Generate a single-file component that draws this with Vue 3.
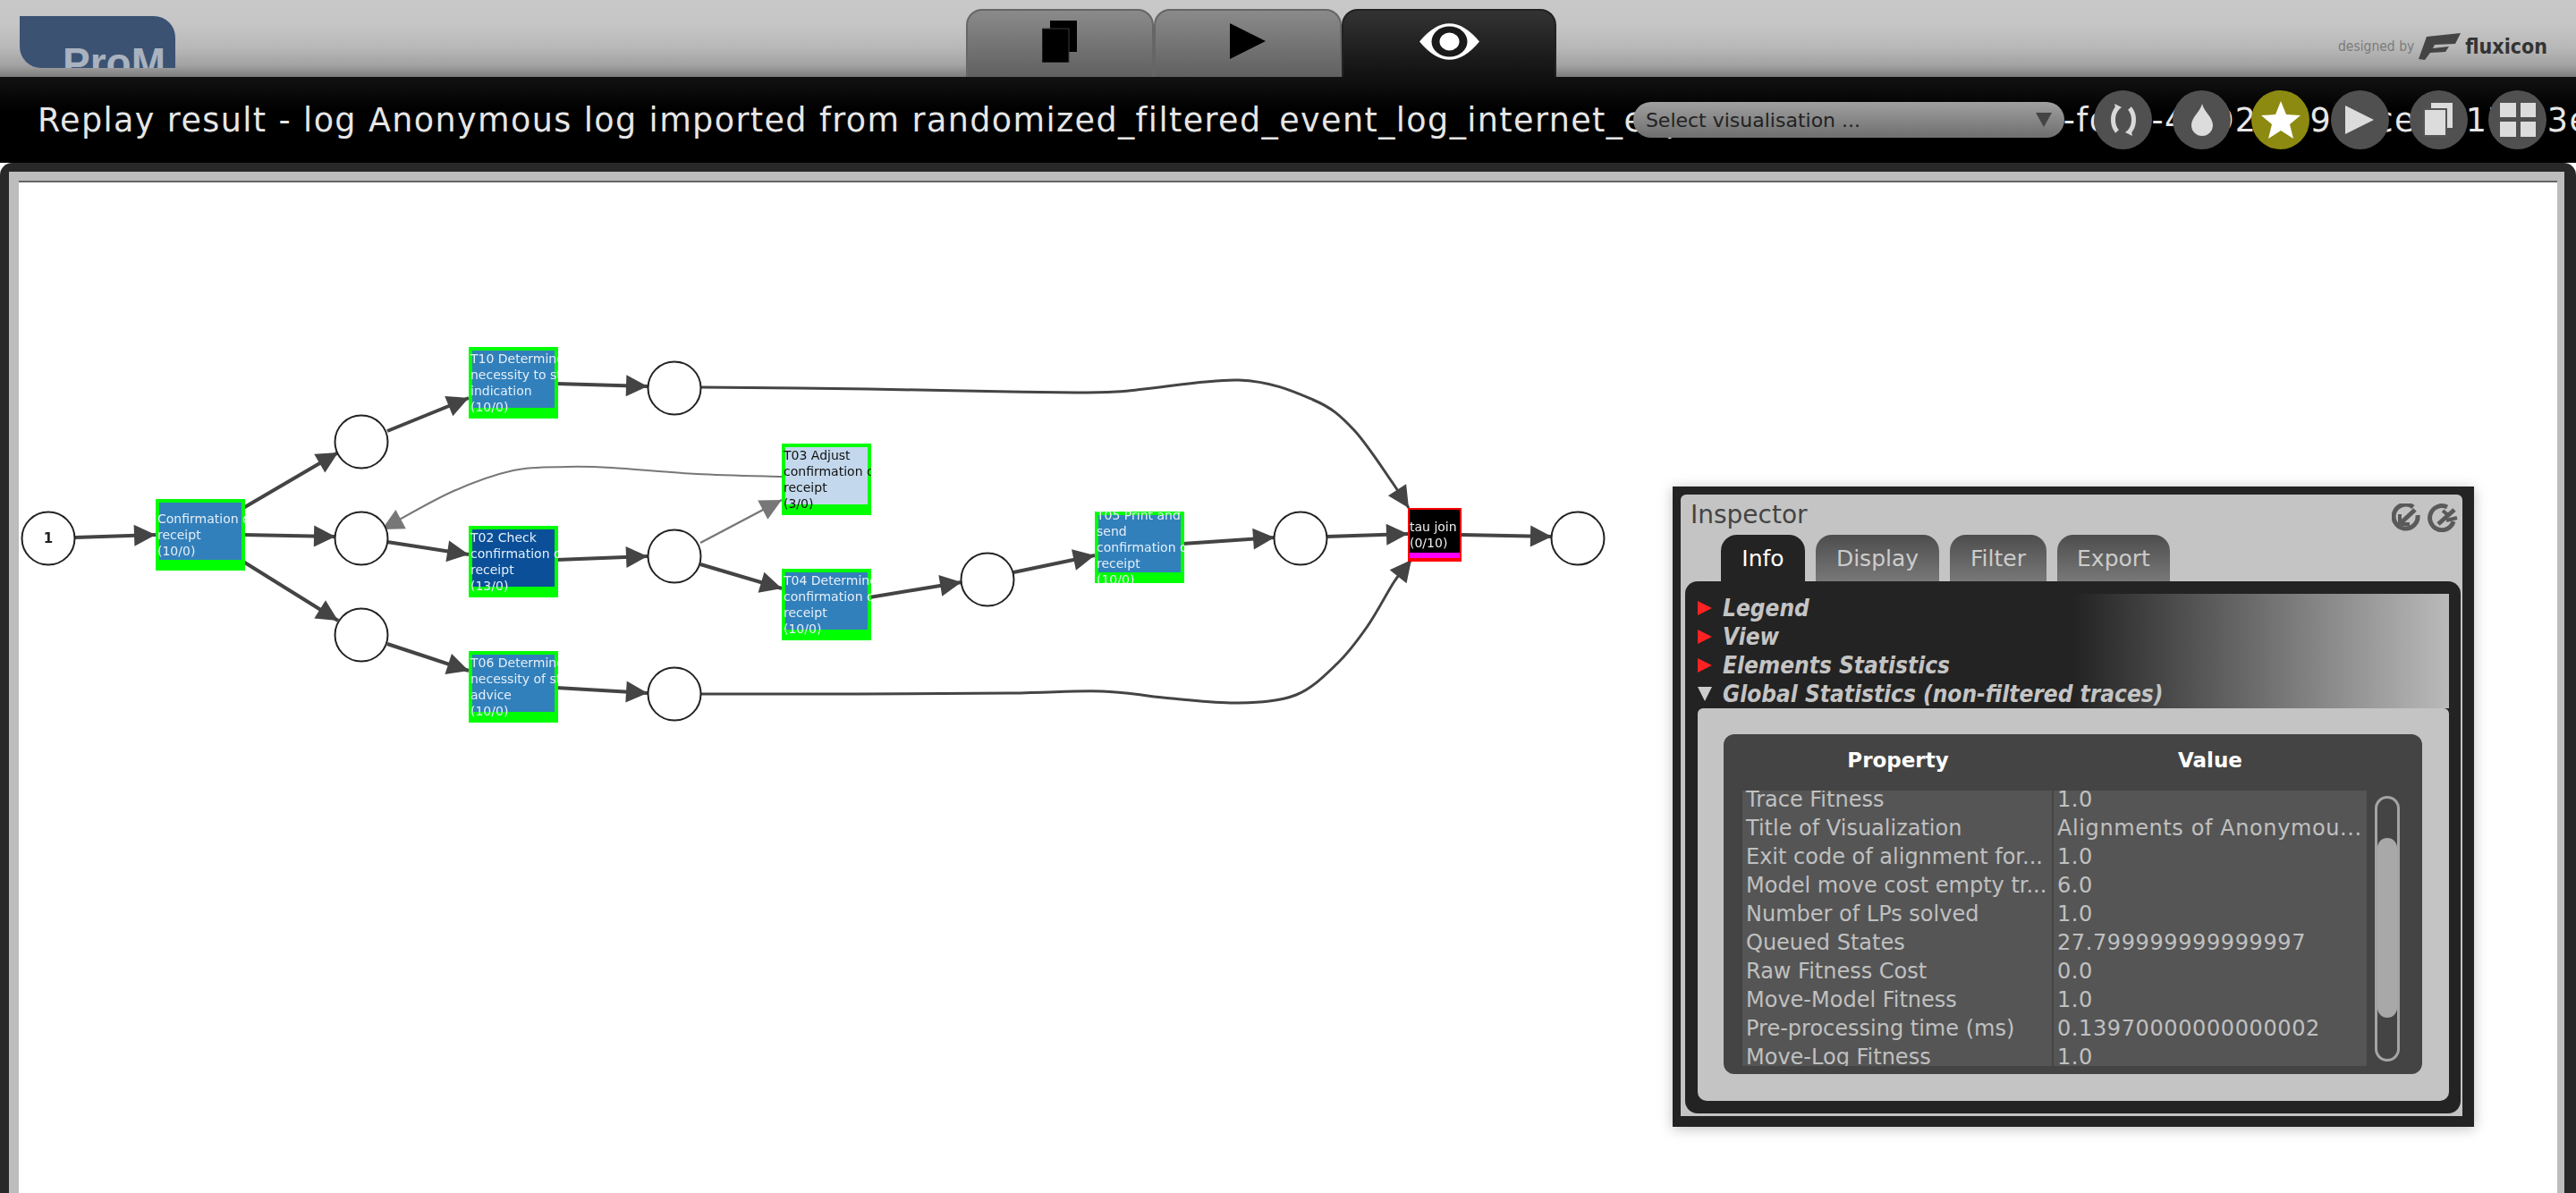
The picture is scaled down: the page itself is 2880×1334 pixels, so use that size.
<template>
  <div class="app">
    <div class="topbar">
      <div class="logo">ProM</div>
      <div class="view-tabs">
        <div class="view-tab">
          <svg width="40" height="47" viewBox="0 0 40 47">
            <rect x="9" y="0" width="30" height="35" fill="#000" />
            <rect x="0" y="9" width="30" height="38" fill="#000" stroke="#3a3a3a" stroke-width="1" />
          </svg>
        </div>
        <div class="view-tab">
          <svg width="40" height="40" viewBox="0 0 40 40"><polygon points="0,0 40,20 0,40" fill="#000" /></svg>
        </div>
        <div class="view-tab active">
          <svg width="67" height="41" viewBox="0 0 67 41">
            <path d="M0 20.5 Q33.5 -20 67 20.5 Q33.5 61 0 20.5Z" fill="#fff" />
            <ellipse cx="33.5" cy="20.5" rx="20" ry="17" fill="#1a1a1a" />
            <ellipse cx="33.5" cy="20.5" rx="11" ry="10" fill="#fff" />
          </svg>
        </div>
      </div>
      <div class="credit">
        <span class="credit-by">designed by</span>
        <svg width="47" height="30" viewBox="0 0 47 30">
          <path d="M9 4 L47 0 L41 12 L18 13 L16 17 L34 15 L30 21 L13 22 L7 30 L0 29Z" fill="#444" />
        </svg>
        <span class="credit-name">fluxicon</span>
      </div>
    </div>

    <div class="titlebar">
      <div class="title">{{ title }}</div>
      <div class="controls">
        <div class="select">
          <span>Select visualisation ...</span>
          <i class="select-arrow"></i>
        </div>
        <div class="round-btn">
          <svg width="40" height="40" viewBox="0 0 40 40" fill="none" stroke="#d8d8d8" stroke-width="5">
            <path d="M13 7 C7 14 7 26 13 33" />
            <path d="M27 7 C33 14 33 26 27 33" />
            <polygon points="10,2 18,6 12,11" fill="#d8d8d8" stroke="none" />
            <polygon points="30,38 22,34 28,29" fill="#d8d8d8" stroke="none" />
          </svg>
        </div>
        <div class="round-btn">
          <svg width="30" height="36" viewBox="0 0 30 36">
            <path d="M15 0 C17 9 27 15 27 24 A12 12 0 0 1 3 24 C3 15 13 9 15 0Z" fill="#dcdcdc" />
          </svg>
        </div>
        <div class="round-btn on">
          <svg width="44" height="42" viewBox="0 0 44 42">
            <polygon points="22,0 28,15 44,16 32,26 36,42 22,33 8,42 12,26 0,16 16,15" fill="#fff" />
          </svg>
        </div>
        <div class="round-btn">
          <svg width="32" height="32" viewBox="0 0 32 32"><polygon points="0,0 32,16 0,32" fill="#dcdcdc" /></svg>
        </div>
        <div class="round-btn">
          <svg width="34" height="38" viewBox="0 0 34 38">
            <rect x="9" y="0" width="24" height="28" fill="#dcdcdc" />
            <rect x="1" y="7" width="25" height="30" fill="#dcdcdc" stroke="#555" stroke-width="2" />
          </svg>
        </div>
        <div class="round-btn">
          <svg width="40" height="38" viewBox="0 0 40 38" fill="#dcdcdc">
            <rect x="0" y="0" width="18" height="16" />
            <rect x="23" y="0" width="17" height="16" />
            <rect x="0" y="21" width="18" height="17" />
            <rect x="23" y="21" width="17" height="17" />
          </svg>
        </div>
      </div>
    </div>

    <div class="frame">
      <div class="frame-inner">
        <div class="canvas">
          <div class="graph">
            <svg class="edges" width="2880" height="1334" viewBox="0 0 2880 1334">
              <g v-for="(e, i) in edgeShapes" :key="i">
                <path :d="e.d" fill="none" :stroke="e.color" :stroke-width="e.width" />
                <polygon :points="e.head" :fill="e.color" />
              </g>
              <circle v-for="p in places" :key="p.x + '-' + p.y" :cx="p.x" :cy="p.y" r="29.5" fill="#fff" stroke="#222" stroke-width="2" />
              <text x="54" y="607" text-anchor="middle" class="token">1</text>
            </svg>
            <div
              v-for="n in nodes"
              :key="n.lines[0]"
              class="node"
              :class="n.kind"
              :style="{ left: n.x + 'px', top: n.y + 'px' }"
            >
              <div class="node-fill"></div>
              <div class="node-label">
                <div v-for="(l, i) in n.lines" :key="i">{{ l }}</div>
              </div>
            </div>
          </div>

          <div class="inspector">
            <div class="insp-body">
              <div class="insp-head">
                <span class="insp-title">Inspector</span>
                <div class="insp-icons">
                  <svg width="32" height="32" viewBox="0 0 32 32" fill="none" stroke="#5a5a5a" stroke-width="5">
                    <path d="M24 4 A13.5 13.5 0 1 0 29 13" />
                    <path d="M26 7 L11 21" />
                    <path d="M9 12 L9 23 L20 23" stroke-width="4" />
                  </svg>
                  <svg width="34" height="32" viewBox="0 0 34 32" fill="none" stroke="#5a5a5a" stroke-width="5">
                    <path d="M22 4 A13.5 13.5 0 1 0 29 20" />
                    <path d="M12 23 L30 7" />
                    <path d="M17 8 L23 13 M21 19 L33 16" stroke-width="4" />
                  </svg>
                </div>
              </div>
              <div class="insp-tabs">
                <div v-for="t in tabs" :key="t" class="insp-tab" :class="{ active: t === 'Info' }">{{ t }}</div>
              </div>
              <div class="panel">
                <div class="sections">
                  <div v-for="s in sections" :key="s.label" class="section">
                    <i class="tri" :class="{ open: s.open }"></i>
                    <span>{{ s.label }}</span>
                  </div>
                </div>
                <div class="section-body">
                  <div class="card">
                    <div class="card-head">
                      <span>Property</span>
                      <span>Value</span>
                    </div>
                    <div class="card-main">
                      <div class="rows">
                        <div class="rows-inner">
                          <div v-for="r in rows" :key="r[0]" class="row">
                            <span class="cell">{{ r[0] }}</span>
                            <span class="cell value">{{ r[1] }}</span>
                          </div>
                        </div>
                      </div>
                      <div class="scroll"><div class="thumb"></div></div>
                    </div>
                  </div>
                </div>
              </div>
            </div>
          </div>
        </div>
      </div>
    </div>
  </div>
</template>

<script setup>
// the part of the title behind the select and the round buttons is never seen
const title = 'Replay result - log Anonymous log imported from randomized_filtered_event_log_internet_explorerstracess2017soo-foc2-4bD2DD99aceDB17cs3ea1'

const tabs = ['Info', 'Display', 'Filter', 'Export']

const sections = [
  { label: 'Legend' },
  { label: 'View' },
  { label: 'Elements Statistics' },
  { label: 'Global Statistics (non-filtered traces)', open: true }
]

const rows = [
  ['Trace Fitness', '1.0'],
  ['Title of Visualization', 'Alignments of Anonymou...'],
  ['Exit code of alignment for...', '1.0'],
  ['Model move cost empty tr...', '6.0'],
  ['Number of LPs solved', '1.0'],
  ['Queued States', '27.799999999999997'],
  ['Raw Fitness Cost', '0.0'],
  ['Move-Model Fitness', '1.0'],
  ['Pre-processing time (ms)', '0.13970000000000002'],
  ['Move-Log Fitness', '1.0']
]

const places = [
  { x: 54, y: 602 }, { x: 404, y: 494 }, { x: 404, y: 602 }, { x: 404, y: 710 },
  { x: 754, y: 434 }, { x: 754, y: 622 }, { x: 754, y: 776 },
  { x: 1104, y: 648 }, { x: 1454, y: 602 }, { x: 1764, y: 602 }
]

const nodes = [
  { x: 174, y: 558, lines: ['Confirmation of', 'receipt', '(10/0)'] },
  { x: 524, y: 388, lines: ['T10 Determine', 'necessity to stop', 'indication', '(10/0)'] },
  { x: 524, y: 588, kind: 'deep', lines: ['T02 Check', 'confirmation of', 'receipt', '(13/0)'] },
  { x: 524, y: 728, lines: ['T06 Determine', 'necessity of stop', 'advice', '(10/0)'] },
  { x: 874, y: 496, kind: 'pale', lines: ['T03 Adjust', 'confirmation of', 'receipt', '(3/0)'] },
  { x: 874, y: 636, lines: ['T04 Determine', 'confirmation of', 'receipt', '(10/0)'] },
  { x: 1224, y: 572, lines: ['T05 Print and', 'send', 'confirmation of', 'receipt', '(10/0)'] },
  { x: 1574, y: 568, kind: 'tau', lines: ['tau join', '(0/10)'] }
]

const DARK = '#444'
const GRAY = '#777'

// straight arcs and the two long curves, as point lists in page coordinates
const edges = [
  { pts: [[84, 601], [174, 598]] },
  { pts: [[272, 568], [378, 506]] },
  { pts: [[272, 598], [375, 600]] },
  { pts: [[272, 628], [378, 694]] },
  { pts: [[433, 482], [524, 445]] },
  { pts: [[433, 606], [524, 620]] },
  { pts: [[433, 720], [524, 750]] },
  { pts: [[622, 429], [724, 432]] },
  { pts: [[622, 626], [724, 622]] },
  { pts: [[622, 769], [724, 775]] },
  { pts: [[783, 631], [874, 658]] },
  { pts: [[972, 668], [1075, 651]] },
  { pts: [[1133, 640], [1224, 621]] },
  { pts: [[1322, 608], [1425, 601]] },
  { pts: [[1483, 600], [1574, 597]] },
  { pts: [[1634, 598], [1735, 600]] },
  { pts: [[783, 607], [874, 559]], color: GRAY, width: 2.5 },
  {
    pts: [[874, 533], [779, 530], [684, 523], [634, 522], [574, 526], [505, 550], [427, 592]],
    color: GRAY,
    width: 2
  },
  {
    pts: [[783, 433], [971, 435], [1130, 438], [1248, 438], [1385, 425], [1468, 447], [1513, 480], [1557, 540], [1575, 568]],
    width: 3
  },
  {
    pts: [[783, 776], [960, 776], [1130, 775], [1232, 773], [1310, 781], [1385, 786], [1449, 777], [1495, 742], [1529, 700], [1559, 650], [1578, 626]],
    width: 3
  }
]

function smoothPath(pts) {
  let d = `M${pts[0][0]} ${pts[0][1]}`
  for (let i = 0; i < pts.length - 1; i++) {
    const p0 = pts[i - 1] || pts[i]
    const p1 = pts[i]
    const p2 = pts[i + 1]
    const p3 = pts[i + 2] || p2
    const c1 = [p1[0] + (p2[0] - p0[0]) / 6, p1[1] + (p2[1] - p0[1]) / 6]
    const c2 = [p2[0] - (p3[0] - p1[0]) / 6, p2[1] - (p3[1] - p1[1]) / 6]
    d += ` C${c1[0]} ${c1[1]} ${c2[0]} ${c2[1]} ${p2[0]} ${p2[1]}`
  }
  return d
}

function arrowHead(a, b) {
  const len = Math.hypot(b[0] - a[0], b[1] - a[1])
  const ux = (b[0] - a[0]) / len
  const uy = (b[1] - a[1]) / len
  const bx = b[0] - ux * 24
  const by = b[1] - uy * 24
  return `${b[0]},${b[1]} ${bx - uy * 12},${by + ux * 12} ${bx + uy * 12},${by - ux * 12}`
}

const edgeShapes = edges.map((e) => {
  const n = e.pts.length
  return {
    d: smoothPath(e.pts),
    head: arrowHead(e.pts[n - 2], e.pts[n - 1]),
    color: e.color || DARK,
    width: e.width || 4
  }
})
</script>

<style>
html, body { background: #fff; overflow: hidden; }
</style>

<style scoped>
.app {
  height: 100vh;
  display: flex;
  flex-direction: column;
  font-family: "DejaVu Sans", sans-serif;
  background: #fff;
  overflow: hidden;
}

/* top strip */
.topbar {
  height: 86px;
  flex: none;
  display: grid;
  grid-template-columns: 1080px 660px 1fr;
  background: linear-gradient(#c8c8c8 0, #c6c6c6 30%, #b8b8b8 62%, #a2a2a2 85%, #7c7c7c 100%);
}

.logo {
  width: 174px;
  height: 58px;
  margin: 18px 0 0 22px;
  padding: 26px 0 0 48px;
  box-sizing: border-box;
  background: #3b5273;
  border-radius: 0 24px 0 24px;
  color: #a9b2bf;
  font: bold 46px/1.15 "Liberation Sans", sans-serif;
  overflow: hidden;
}

.view-tabs {
  display: grid;
  grid-template-columns: 210px 210px 240px;
  margin-top: 10px;
}

.view-tab {
  display: flex;
  align-items: center;
  justify-content: center;
  padding-bottom: 6px;
  background: linear-gradient(#8a8a8a, #606060);
  border: 2px solid #666;
  border-bottom: none;
  border-radius: 18px 18px 0 0;
  box-sizing: border-box;
}

.view-tab.active {
  background: linear-gradient(#333, #111);
  border-color: #222;
}

.credit {
  display: flex;
  align-items: center;
  justify-content: flex-end;
  gap: 5px;
  padding: 16px 32px 0 0;
  height: 48px;
  margin-top: 20px;
  box-sizing: border-box;
}

.credit-by {
  font: 15.5px "DejaVu Sans Condensed", "DejaVu Sans", sans-serif;
  color: #7c7c7c;
}

.credit-name {
  font: bold 23px "DejaVu Sans Condensed", "DejaVu Sans", sans-serif;
  color: #333;
}

/* title strip */
.titlebar {
  position: relative;
  height: 96px;
  flex: none;
  display: flex;
  align-items: center;
  padding-left: 42px;
  background: linear-gradient(#121212, #000 40%);
  overflow: hidden;
}

.title {
  font-size: 36.5px;
  letter-spacing: 1.4px;
  color: #e6e6e6;
  white-space: nowrap;
}

.controls {
  position: absolute;
  inset: 0;
  display: flex;
  align-items: center;
  justify-content: flex-end;
  gap: 23.2px;
  padding-right: 33px;
}

.select {
  width: 482px;
  height: 40px;
  margin-right: 10px;
  padding: 0 14px;
  box-sizing: border-box;
  display: flex;
  align-items: center;
  justify-content: space-between;
  background: linear-gradient(#a0a0a0, #6e6e6e);
  border-radius: 20px;
  font: 22px "DejaVu Sans", sans-serif;
  color: #222;
}

.select-arrow {
  width: 0;
  height: 0;
  border-left: 9px solid transparent;
  border-right: 9px solid transparent;
  border-top: 16px solid #444;
}

.round-btn {
  width: 65px;
  height: 66px;
  flex: none;
  display: flex;
  align-items: center;
  justify-content: center;
  background: #505050;
  border-radius: 50%;
}

.round-btn.on {
  background: #8d8a12;
}

/* main frame */
.frame {
  flex: 1;
  min-height: 0;
  display: flex;
  padding: 10px 13px 0 10px;
  background: #282828;
  border-radius: 14px 14px 0 0;
}

.frame-inner {
  flex: 1;
  display: flex;
  padding: 10px 8px 0 11px;
  background: #bdbdbd;
}

.canvas {
  position: relative;
  flex: 1;
  background: #fff;
  border-top: 2px solid #666;
  overflow: hidden;
}

.graph {
  position: absolute;
  left: -21px;
  top: -204px;
  width: 2880px;
  height: 1334px;
  filter: blur(0.4px);
}

.edges {
  position: absolute;
  left: 0;
  top: 0;
}

.token {
  font: bold 15px "DejaVu Sans", sans-serif;
  fill: #222;
}

.node {
  position: absolute;
  width: 100px;
  height: 80px;
  display: flex;
  align-items: center;
  background: #0f0;
  color: #e4eef8;
  overflow: hidden;
}

.node-fill {
  position: absolute;
  left: 4px;
  right: 4px;
  top: 4px;
  bottom: 12px;
  background: #3280bb;
}

.node.deep .node-fill { background: #0a4f98; }
.node.pale .node-fill { background: #c3d8ec; }
.node.pale { color: #111; }

.node.tau {
  width: 60px;
  height: 60px;
  background: #f00;
  color: #eee;
}

.node.tau .node-fill {
  left: 2px;
  right: 2px;
  top: 2px;
  bottom: 4px;
  background: #000;
  border-bottom: 6px solid #f0f;
}

.node-label {
  position: relative;
  padding-left: 2px;
  font-size: 14px;
  line-height: 18px;
  white-space: nowrap;
}

/* inspector */
.inspector {
  position: absolute;
  left: 1849px;
  top: 340px;
  width: 896px;
  height: 716px;
  padding: 9px 13px 12px 9px;
  box-sizing: border-box;
  display: flex;
  background: #232323;
  box-shadow: 0 2px 14px rgba(0, 0, 0, 0.25);
}

.insp-body {
  flex: 1;
  min-height: 0;
  display: flex;
  flex-direction: column;
  padding: 0 2px 3px 5px;
  background: #c4c4c4;
  border-radius: 6px 6px 0 0;
}

.insp-head {
  height: 45px;
  flex: none;
  display: flex;
  align-items: center;
  justify-content: space-between;
  padding: 0 3px 0 6px;
}

.insp-title {
  font-size: 28px;
  color: #444;
}

.insp-icons {
  display: flex;
  gap: 8px;
  padding-top: 6px;
}

.insp-tabs {
  height: 52px;
  flex: none;
  display: flex;
  gap: 12px;
  padding-left: 40px;
}

.insp-tab {
  display: flex;
  align-items: center;
  justify-content: center;
  padding: 0 22px;
  font-size: 25px;
  color: #ccc;
  background: linear-gradient(#4d4d4d, #787878);
  border-radius: 18px 18px 0 0;
}

.insp-tab.active {
  background: #232323;
  color: #fff;
}

.insp-tab:nth-child(1) { width: 94px; box-sizing: border-box; }
.insp-tab:nth-child(2) { width: 138px; box-sizing: border-box; }
.insp-tab:nth-child(3) { width: 108px; box-sizing: border-box; }
.insp-tab:nth-child(4) { width: 126px; box-sizing: border-box; }

.panel {
  flex: 1;
  min-height: 0;
  display: flex;
  flex-direction: column;
  padding: 14px 13px 14px 14px;
  background: #232323;
  border-radius: 14px;
}

.sections {
  flex: none;
  background: linear-gradient(90deg, #232323 50%, #bababa 100%);
}

.section {
  height: 32px;
  display: flex;
  align-items: center;
  gap: 12px;
  font: italic bold 26px "DejaVu Sans Condensed", "DejaVu Sans", sans-serif;
  color: #c4c4c4;
}

.tri {
  width: 0;
  height: 0;
  border-top: 8px solid transparent;
  border-bottom: 8px solid transparent;
  border-left: 16px solid #f22;
}

.tri.open {
  border-left: 8px solid transparent;
  border-right: 8px solid transparent;
  border-top: 16px solid #ccc;
  border-bottom: none;
}

.section-body {
  flex: 1;
  min-height: 0;
  display: flex;
  padding: 29px 30px 30px 29px;
  background: #c4c4c4;
  border-radius: 6px 6px 10px 10px;
}

.card {
  flex: 1;
  min-height: 0;
  display: flex;
  flex-direction: column;
  padding: 0 24px 9px 21px;
  background: #444;
  border-radius: 12px;
}

.card-head {
  height: 63px;
  flex: none;
  display: grid;
  grid-template-columns: 348px 350px;
  align-items: center;
  text-align: center;
  padding-bottom: 6px;
  box-sizing: border-box;
  font-weight: bold;
  font-size: 23px;
  color: #fff;
}

.card-main {
  flex: 1;
  min-height: 0;
  display: flex;
  gap: 9px;
}

.rows {
  width: 698px;
  flex: none;
  overflow: hidden;
  background: #555;
}

.rows-inner {
  margin-top: -6px;
}

.row {
  height: 32px;
  display: grid;
  grid-template-columns: 348px 350px;
  font-size: 24px;
  line-height: 32px;
  color: #c0c0c0;
}

.cell {
  padding-left: 4px;
  white-space: nowrap;
  overflow: hidden;
}

.cell:first-child {
  border-right: 2px solid #444;
}

.cell.value {
  letter-spacing: 0.6px;
}

.scroll {
  width: 28px;
  height: 297px;
  margin-top: 6px;
  flex: none;
  box-sizing: border-box;
  border: 3px solid #a4a4a4;
  border-radius: 14px;
}

.thumb {
  height: 201px;
  margin-top: 44px;
  background: #a8a8a8;
  border-radius: 12px;
}
</style>
